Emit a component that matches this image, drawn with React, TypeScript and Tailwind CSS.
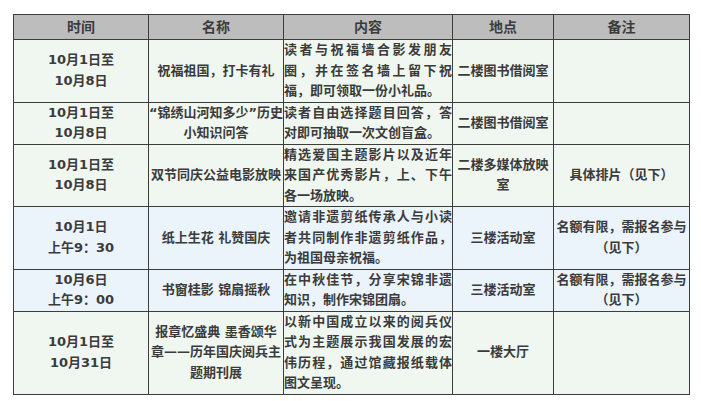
import React from 'react';

type Row = {
    time: React.ReactNode;
    name: React.ReactNode;
    content: string;
    place: React.ReactNode;
    note: React.ReactNode;
    tone: 'green' | 'blue';
};

const rows: Row[] = [
    {
        time: <>10月1日至<br />10月8日</>,
        name: '祝福祖国，打卡有礼',
        content: '读者与祝福墙合影发朋友圈，并在签名墙上留下祝福，即可领取一份小礼品。',
        place: '二楼图书借阅室',
        note: '',
        tone: 'green',
    },
    {
        time: <>10月1日至<br />10月8日</>,
        name: <>“锦绣山河知多少”历史<br />小知识问答</>,
        content: '读者自由选择题目回答，答对即可抽取一次文创盲盒。',
        place: '二楼图书借阅室',
        note: '',
        tone: 'green',
    },
    {
        time: <>10月1日至<br />10月8日</>,
        name: '双节同庆公益电影放映',
        content: '精选爱国主题影片以及近年来国产优秀影片，上、下午各一场放映。',
        place: <>二楼多媒体放映<br />室</>,
        note: '具体排片（见下）',
        tone: 'green',
    },
    {
        time: <>10月1日<br />上午9：30</>,
        name: '纸上生花 礼赞国庆',
        content: '邀请非遗剪纸传承人与小读者共同制作非遗剪纸作品，为祖国母亲祝福。',
        place: '三楼活动室',
        note: <>名额有限，需报名参与<br />（见下）</>,
        tone: 'blue',
    },
    {
        time: <>10月6日<br />上午9：00</>,
        name: '书窗桂影 锦扇摇秋',
        content: '在中秋佳节，分享宋锦非遗知识，制作宋锦团扇。',
        place: '三楼活动室',
        note: <>名额有限，需报名参与<br />（见下）</>,
        tone: 'blue',
    },
    {
        time: <>10月1日至<br />10月31日</>,
        name: <>报章忆盛典 墨香颂华<br />章——历年国庆阅兵主<br />题期刊展</>,
        content: '以新中国成立以来的阅兵仪式为主题展示我国发展的宏伟历程，通过馆藏报纸载体图文呈现。',
        place: '一楼大厅',
        note: '',
        tone: 'green',
    },
];

const headers = ['时间', '名称', '内容', '地点', '备注'];

const App: React.FC = () => {
    return (
        <div className="w-[701px] h-[401px] bg-white pt-[14px] pl-[13px] font-['DejaVu_Sans','Noto_Sans_CJK_SC',sans-serif] font-bold text-[#3b3b3b]">
            <div className="grid w-[677px] grid-cols-[134px_134px_168px_100px_135px] gap-px bg-[#3d3d3d] p-px">
                {headers.map((h) => (
                    <div key={h} className="flex h-6 items-center justify-center bg-[#bdbdbd] text-[14px] leading-6">
                        {h}
                    </div>
                ))}
                {rows.map((r, i) => {
                    const bg = r.tone === 'green' ? 'bg-[#f0f7f0]' : 'bg-[#ebf3fb]';
                    const cell = `flex items-center justify-center text-center text-[13px] leading-[20.5px] ${bg}`;
                    return (
                        <React.Fragment key={i}>
                            <div className={cell}>
                                <div>{r.time}</div>
                            </div>
                            <div className={cell}>
                                <div className="whitespace-nowrap">{r.name}</div>
                            </div>
                            <div className={`flex items-center text-[13px] leading-[20.5px] ${bg}`}>
                                <p className="w-full text-justify">{r.content}</p>
                            </div>
                            <div className={cell}>
                                <div>{r.place}</div>
                            </div>
                            <div className={cell}>
                                <div className="whitespace-nowrap">{r.note}</div>
                            </div>
                        </React.Fragment>
                    );
                })}
            </div>
        </div>
    );
};

export default App;
